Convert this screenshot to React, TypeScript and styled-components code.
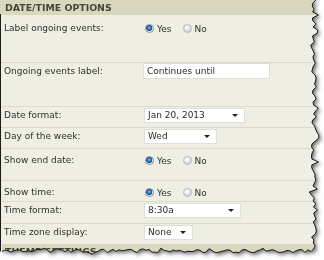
import React from 'react';
import styled, { createGlobalStyle } from 'styled-components';

const GlobalStyle = createGlobalStyle`
  html, body {
    margin: 0;
    padding: 0;
    background: #ffffff;
  }
`;

// torn paper edge, deterministic so every render looks the same
const seeded = (seed: number) => {
  let s = seed;
  return () => {
    s = (s * 9301 + 49297) % 233280;
    return s / 233280;
  };
};

const buildEdge = () => {
  const rnd = seeded(17);
  const right: [number, number][] = [];
  for (let y = 0; y <= 250; y += 3) {
    const jag = rnd() < 0.2 ? (rnd() - 0.5) * 10 : (rnd() - 0.5) * 5;
    right.push([314 + jag, y]);
  }
  const bottom: [number, number][] = [];
  for (let x = 311; x >= 0; x -= 3) {
    const jag = rnd() < 0.2 ? (rnd() - 0.5) * 7 : (rnd() - 0.5) * 3.5;
    bottom.push([x, 251 + jag]);
  }
  return { right, bottom };
};

const EDGE = buildEdge();
const CLIP = `polygon(0px 0px, ${[...EDGE.right, ...EDGE.bottom]
  .map(([x, y]) => `${x.toFixed(1)}px ${y.toFixed(1)}px`)
  .join(', ')})`;
const OUTLINE =
  `M0.5 14 L0.5 ${EDGE.bottom[EDGE.bottom.length - 1][1].toFixed(1)} ` +
  `M${EDGE.right[0][0].toFixed(1)} 0 ` +
  [...EDGE.right, ...EDGE.bottom]
    .map(([x, y]) => `L${x.toFixed(1)} ${y.toFixed(1)}`)
    .join(' ');

const Frame = styled.div`
  position: relative;
  width: 324px;
  height: 260px;
  overflow: hidden;
  background: #ffffff;
`;

const Shadow = styled.div`
  filter: drop-shadow(2px 2px 2px rgba(0, 0, 0, 0.6));
`;

const Paper = styled.div`
  width: 322px;
  height: 258px;
  background: #efeee2;
  clip-path: ${CLIP};
  font-family: 'DejaVu Sans', Verdana, sans-serif;
  font-size: 9px;
  color: #303030;
  display: flex;
  flex-direction: column;
`;

const Outline = styled.svg`
  position: absolute;
  left: 0;
  top: 0;
  pointer-events: none;
`;

const SectionHeader = styled.div`
  height: 15px;
  line-height: 15px;
  padding-left: 5px;
  background: #dad7bf;
  font-weight: bold;
  font-size: 9.4px;
  color: #454538;
  flex-shrink: 0;
`;

const Row = styled.div<{ $h: number; $pt: number; $first?: boolean }>`
  box-sizing: border-box;
  height: ${(p) => p.$h}px;
  padding: ${(p) => p.$pt}px 0 0 4px;
  border-top: ${(p) => (p.$first ? 'none' : '1px solid #dcdbcb')};
  display: grid;
  grid-template-columns: 140px 1fr;
  align-items: start;
  flex-shrink: 0;
`;

const Label = styled.div<{ $mt?: number }>`
  line-height: 15px;
  margin-top: ${(p) => p.$mt || 0}px;
  white-space: nowrap;
`;

const Field = styled.div<{ $h?: number }>`
  display: flex;
  align-items: center;
  height: ${(p) => p.$h || 15}px;
`;

const RadioDot = styled.span<{ $checked?: boolean }>`
  box-sizing: border-box;
  width: 9px;
  height: 9px;
  border-radius: 50%;
  margin: 0 3px 0 1px;
  border: 1px solid ${(p) => (p.$checked ? '#8a8f96' : '#b4b6b8')};
  background: ${(p) =>
    p.$checked
      ? 'radial-gradient(circle at 45% 40%, #8fc2ef 0, #2d74c2 1.6px, #1c4f8f 3px, #d9dde2 3.3px, #f4f5f6 4px)'
      : 'radial-gradient(circle at 40% 35%, #ffffff 0, #eceef0 2px, #d6d9dc 4px)'};
  flex-shrink: 0;
`;

const RadioText = styled.span`
  margin-right: 10px;
`;

const TextBox = styled.div<{ $w: number }>`
  box-sizing: border-box;
  width: ${(p) => p.$w}px;
  height: 16px;
  line-height: 14px;
  padding-left: 3px;
  background: #ffffff;
  border: 1px solid #dedfd8;
  color: #2a2a2a;
  margin-left: -1px;
`;

const SelectBox = styled.div<{ $w: number }>`
  box-sizing: border-box;
  position: relative;
  width: ${(p) => p.$w}px;
  height: 15px;
  line-height: 13px;
  padding-left: 3px;
  background: #ffffff;
  border: 1px solid #dedfd8;
  color: #2a2a2a;

  &::after {
    content: '';
    position: absolute;
    right: 6px;
    top: 5px;
    border-left: 3px solid transparent;
    border-right: 3px solid transparent;
    border-top: 3px solid #222222;
  }
`;

const RadioPair: React.FC = () => (
  <Field>
    <RadioDot $checked />
    <RadioText>Yes</RadioText>
    <RadioDot />
    <RadioText>No</RadioText>
  </Field>
);

export default function App() {
  return (
    <Frame>
      <GlobalStyle />
      <Shadow>
        <Paper>
          <SectionHeader>DATE/TIME OPTIONS</SectionHeader>

          <Row $h={47} $pt={6} $first>
            <Label>Label ongoing events:</Label>
            <RadioPair />
          </Row>

          <Row $h={44} $pt={0}>
            <Label $mt={1}>Ongoing events label:</Label>
            <Field $h={16}>
              <TextBox $w={127}>Continues until</TextBox>
            </Field>
          </Row>

          <Row $h={21} $pt={1}>
            <Label>Date format:</Label>
            <Field>
              <SelectBox $w={101}>Jan 20, 2013</SelectBox>
            </Field>
          </Row>

          <Row $h={21} $pt={1}>
            <Label>Day of the week:</Label>
            <Field>
              <SelectBox $w={73}>Wed</SelectBox>
            </Field>
          </Row>

          <Row $h={32} $pt={4}>
            <Label>Show end date:</Label>
            <RadioPair />
          </Row>

          <Row $h={21} $pt={4}>
            <Label>Show time:</Label>
            <RadioPair />
          </Row>

          <Row $h={22} $pt={1}>
            <Label>Time format:</Label>
            <Field>
              <SelectBox $w={97}>8:30a</SelectBox>
            </Field>
          </Row>

          <Row $h={21} $pt={1}>
            <Label>Time zone display:</Label>
            <Field>
              <SelectBox $w={49}>None</SelectBox>
            </Field>
          </Row>

          <SectionHeader>THEME SETTINGS</SectionHeader>
        </Paper>
      </Shadow>
      <Outline width={324} height={260} viewBox="0 0 324 260">
        <path d={OUTLINE} fill="none" stroke="#1c1c1c" strokeWidth={1} strokeLinejoin="round" />
      </Outline>
    </Frame>
  );
}
